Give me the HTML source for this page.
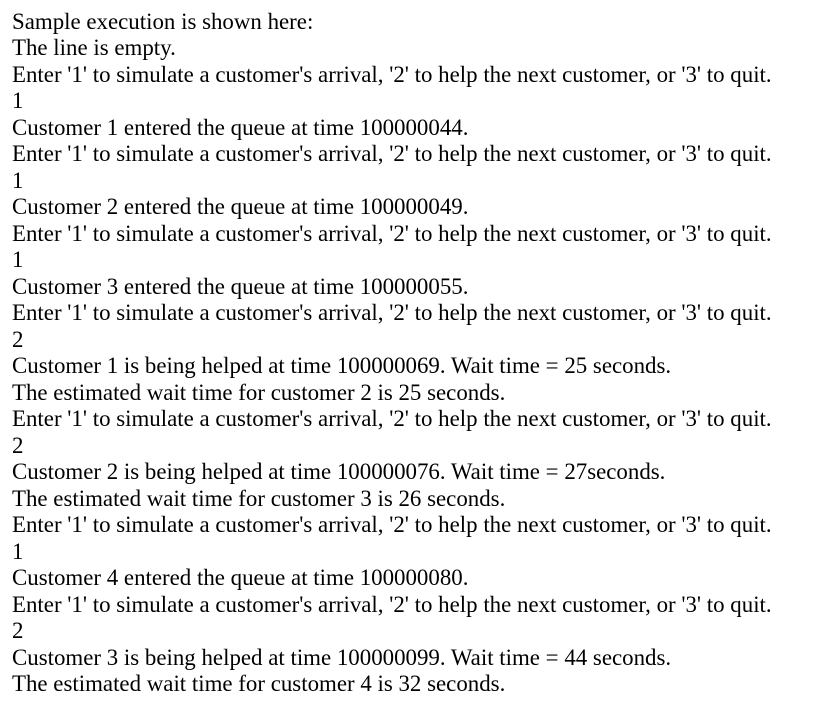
<!DOCTYPE html>
<html><head><meta charset="utf-8"><style>
html,body{margin:0;padding:0;background:#fff;width:833px;height:707px;overflow:hidden}
.c{position:absolute;left:12px;top:9px;font-family:"Liberation Serif",serif;font-size:22.9px;line-height:26.48px;color:#000;white-space:pre}
</style></head><body><div class="c">Sample execution is shown here:
The line is empty.
Enter '1' to simulate a customer's arrival, '2' to help the next customer, or '3' to quit.
1
Customer 1 entered the queue at time 100000044.
Enter '1' to simulate a customer's arrival, '2' to help the next customer, or '3' to quit.
1
Customer 2 entered the queue at time 100000049.
Enter '1' to simulate a customer's arrival, '2' to help the next customer, or '3' to quit.
1
Customer 3 entered the queue at time 100000055.
Enter '1' to simulate a customer's arrival, '2' to help the next customer, or '3' to quit.
2
Customer 1 is being helped at time 100000069. Wait time = 25 seconds.
The estimated wait time for customer 2 is 25 seconds.
Enter '1' to simulate a customer's arrival, '2' to help the next customer, or '3' to quit.
2
Customer 2 is being helped at time 100000076. Wait time = 27seconds.
The estimated wait time for customer 3 is 26 seconds.
Enter '1' to simulate a customer's arrival, '2' to help the next customer, or '3' to quit.
1
Customer 4 entered the queue at time 100000080.
Enter '1' to simulate a customer's arrival, '2' to help the next customer, or '3' to quit.
2
Customer 3 is being helped at time 100000099. Wait time = 44 seconds.
The estimated wait time for customer 4 is 32 seconds.</div></body></html>
